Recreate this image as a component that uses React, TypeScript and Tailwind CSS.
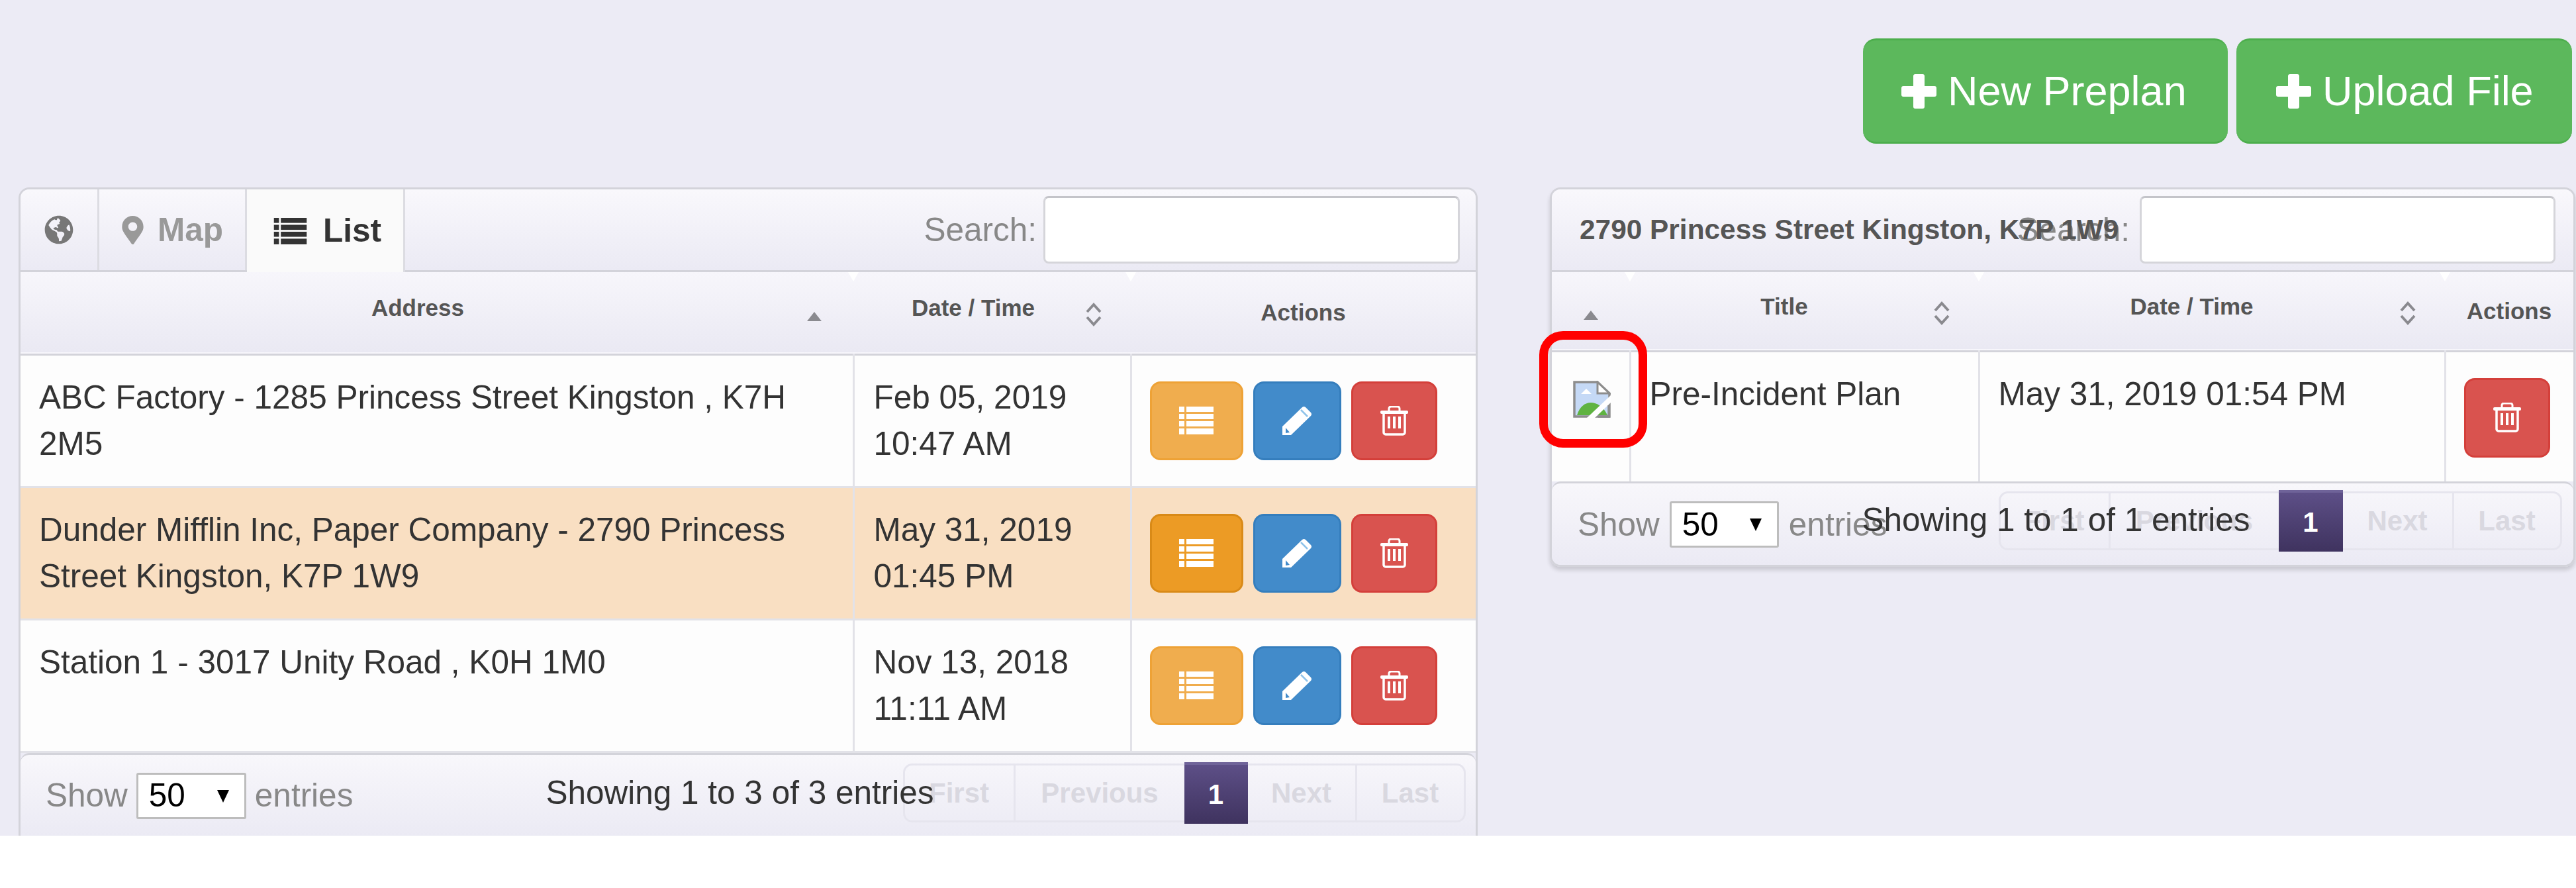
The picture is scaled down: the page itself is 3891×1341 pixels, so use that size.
import { FaGlobeAmericas, FaMapMarkerAlt } from 'react-icons/fa';

// drawn icons: the glyphicon set is not in the icon packages
function PlusIcon() {
  return (
    <svg viewBox="0 0 53 52" className="w-[53px] h-[52px] shrink-0" fill="white">
      <path d="M18 3a3 3 0 0 1 3-3h11a3 3 0 0 1 3 3v15h15a3 3 0 0 1 3 3v10a3 3 0 0 1-3 3H35v15a3 3 0 0 1-3 3H21a3 3 0 0 1-3-3V34H3a3 3 0 0 1-3-3V21a3 3 0 0 1 3-3h15z" />
    </svg>
  );
}

function ListIcon({ className }: { className: string }) {
  return (
    <svg viewBox="0 0 52 42" className={className} fill="currentColor">
      <rect x="0" y="0" width="8" height="8" />
      <rect x="11" y="0" width="41" height="8" />
      <rect x="0" y="11" width="8" height="8" />
      <rect x="11" y="11" width="41" height="8" />
      <rect x="0" y="22" width="8" height="8" />
      <rect x="11" y="22" width="41" height="8" />
      <rect x="0" y="33" width="8" height="9" />
      <rect x="11" y="33" width="41" height="9" />
    </svg>
  );
}

function PencilIcon() {
  return (
    <svg viewBox="0 0 46 45" className="w-[46px] h-[45px]">
      <path d="M1 44V31L31 2a4 4 0 0 1 5 0l8 8a4 4 0 0 1 0 5L14 44z" fill="white" />
      <path d="M29 6l10 10" stroke="#8fc3ea" strokeWidth="2.5" fill="none" />
      <path d="M6 33l6 7-6 1z" fill="#428bca" />
    </svg>
  );
}

function TrashIcon() {
  return (
    <svg viewBox="0 0 42 45" className="w-[42px] h-[45px]">
      <path d="M13 8V4a3 3 0 0 1 3-3h10a3 3 0 0 1 3 3v4" stroke="white" strokeWidth="3" fill="none" />
      <rect x="0" y="7" width="42" height="5" rx="2" fill="white" />
      <path d="M5 11v29a3 3 0 0 0 3 3h26a3 3 0 0 0 3-3V11" stroke="white" strokeWidth="3.5" fill="none" />
      <rect x="11" y="16" width="4" height="18" fill="white" />
      <rect x="19" y="16" width="4" height="18" fill="white" />
      <rect x="27" y="16" width="4" height="18" fill="white" />
    </svg>
  );
}

function SortUp() {
  return (
    <svg viewBox="0 0 30 18" className="w-[30px] h-[18px] shrink-0 mt-[12px]">
      <path d="M15 2l11 14H4z" fill="#8a8a8f" />
    </svg>
  );
}

function SortBoth() {
  return (
    <svg viewBox="0 0 30 36" className="w-[30px] h-[36px] shrink-0 mt-[6px]" fill="none" stroke="#8a8a8f" strokeWidth="4">
      <path d="M5 14L15 3l10 11" />
      <path d="M5 22l10 11 10-11" />
    </svg>
  );
}

function BrokenImage() {
  return (
    <svg viewBox="0 0 57 56" className="w-[57px] h-[56px] block">
      <path d="M2 2h35l18 17v35H2z" fill="#c5d9f6" stroke="#8d8d8d" strokeWidth="3.5" />
      <path d="M37 2v17h18z" fill="white" stroke="#8d8d8d" strokeWidth="3" />
      <path d="M12 20l8-8 8 8z" fill="white" />
      <path d="M6 52c4-13 12-19 21-19s19 6 25 19z" fill="#5fb341" />
      <path d="M57 22v11L33 56H21z" fill="white" />
      <path d="M54 37v17H38" fill="none" stroke="#8d8d8d" strokeWidth="3.5" />
    </svg>
  );
}

function HeaderNotch() {
  return <span className="absolute left-[-8px] top-0 w-0 h-0 border-x-[8px] border-x-transparent border-t-[14px] border-t-white" />;
}

function HeadCell({ title, sort }: { title: string; sort: 'up' | 'both' }) {
  return (
    <div className="flex items-center">
      <span className="flex-1 text-center mb-[14px]">{title}</span>
      {sort === 'up' ? <SortUp /> : <SortBoth />}
    </div>
  );
}

function ActionButtons({ active }: { active: boolean }) {
  return (
    <div className="flex gap-[15px] pl-[27px]">
      <button className={`w-[141px] h-[119px] rounded-[16px] border-[3px] text-white flex items-center justify-center ${active ? 'bg-[#ec9b25] border-[#d98a17]' : 'bg-[#f0ad4e] border-[#eea236]'}`}>
        <ListIcon className="w-[52px] h-[42px]" />
      </button>
      <button className="w-[133px] h-[119px] rounded-[16px] bg-[#428bca] border-[3px] border-[#357ebd] flex items-center justify-center">
        <PencilIcon />
      </button>
      <button className="w-[130px] h-[119px] rounded-[16px] bg-[#d9534f] border-[3px] border-[#d43f3a] flex items-center justify-center">
        <TrashIcon />
      </button>
    </div>
  );
}

function ShowEntries({ gap, selectWidth }: { gap: string; selectWidth: string }) {
  return (
    <div className={`flex items-center shrink-0 text-[#888] h-[70px] ${gap}`}>
      <span>Show</span>
      <div className={`h-[70px] ${selectWidth} bg-white border-[3px] border-[#bdbdbd] rounded-[3px] text-black flex items-center justify-between pl-[16px] pr-[22px]`}>
        <span>50</span>
        <svg viewBox="0 0 20 20" className="w-[20px] h-[20px]"><path d="M1 1h18L10 20z" fill="black" /></svg>
      </div>
      <span>entries</span>
    </div>
  );
}

function PageLink({ label, width, divider }: { label: string; width: string; divider?: boolean }) {
  return (
    <span className={`h-full flex items-center justify-center text-[#d9d8e0] ${width} ${divider ? 'border-r-[3px] border-[#e6e5ee]' : ''}`}>{label}</span>
  );
}

function Pagination({ widths, className }: { widths: string[]; className: string }) {
  return (
    <div className={`h-[89px] shrink-0 flex items-center rounded-[14px] border-[3px] border-[#e6e5ee] text-[42px] font-bold ${className}`}>
      <PageLink label="First" width={widths[0]} divider />
      <PageLink label="Previous" width={widths[1]} />
      <span className={`h-[93px] -my-[2px] ${widths[2]} flex items-center justify-center text-white bg-linear-to-b from-[#5d4f87] to-[#3f335f] border-t-[4px] border-[#6f6399]`}>1</span>
      <PageLink label="Next" width={widths[3]} divider />
      <PageLink label="Last" width={widths[4]} />
    </div>
  );
}

const rows = [
  { address: 'ABC Factory - 1285 Princess Street Kingston , K7H 2M5', date: 'Feb 05, 2019', time: '10:47 AM', active: false },
  { address: 'Dunder Mifflin Inc, Paper Company - 2790 Princess Street Kingston, K7P 1W9', date: 'May 31, 2019', time: '01:45 PM', active: true },
  { address: 'Station 1 - 3017 Unity Road , K0H 1M0', date: 'Nov 13, 2018', time: '11:11 AM', active: false },
];

function AddressPanel() {
  return (
    <section className="w-[2204px] h-[979px] shrink-0 overflow-hidden border-[3px] border-b-0 border-[#d3d3da] rounded-t-[16px]">
      {/* tabs and search */}
      <div className="h-[125px] flex items-stretch justify-between border-b-[3px] border-[#d3d3da] bg-linear-to-b from-[#f9f8fc] to-[#ebeaf4]">
        <div className="flex items-stretch">
          <div className="w-[119px] flex items-center justify-center border-r-[3px] border-[#dcdce2] text-[#777] text-[44px]">
            <FaGlobeAmericas />
          </div>
          <div className="w-[223px] flex items-center gap-[16px] pl-[29px] border-r-[3px] border-[#dcdce2] text-[#999] font-bold">
            <FaMapMarkerAlt className="text-[43px]" />
            <span>Map</span>
          </div>
          <div className="w-[239px] -mb-[3px] flex items-center gap-[24px] pl-[40px] border-r-[3px] border-[#dcdce2] bg-[#fafafa] text-[#333] font-bold relative">
            <ListIcon className="w-[51px] h-[40px]" />
            <span>List</span>
          </div>
        </div>
        <div className="flex items-center gap-[10px] pr-[24px] text-[#888]">
          <label>Search:</label>
          <input className="w-[629px] h-[102px] bg-white border-[3px] border-[#d5d5da] border-t-[#c4c4c9] rounded-[8px]" />
        </div>
      </div>

      <table className="w-[2198px] table-fixed">
        <colgroup>
          <col className="w-[1258px]" />
          <col className="w-[419px]" />
          <col className="w-[521px]" />
        </colgroup>
        <thead>
          <tr className="h-[124px] bg-linear-to-b from-[#f7f6fb] to-[#eae9f3] border-b-[3px] border-[#d3d3da] text-[35px] font-bold text-[#555]">
            <th className="font-bold pl-[16px] pr-[44px]">
              <HeadCell title="Address" sort="up" />
            </th>
            <th className="font-bold relative pl-[14px] pr-[41px]">
              <HeaderNotch />
              <HeadCell title="Date / Time" sort="both" />
            </th>
            <th className="font-bold relative">
              <HeaderNotch />
              Actions
            </th>
          </tr>
        </thead>
        <tbody>
          {rows.map((row) => (
            <tr key={row.address} className={`h-[200px] border-b-[3px] border-[#e2e2e8] ${row.active ? 'bg-[#f9dfc2]' : 'bg-[#fdfdfd]'}`}>
              <td className="align-top p-[28px] leading-[70px]">{row.address}</td>
              <td className="align-top p-[28px] pl-[29px] leading-[70px] border-l-[3px] border-[#e2e2e8]">
                {row.date}
                <br />
                {row.time}
              </td>
              <td className="border-l-[3px] border-[#e2e2e8]">
                <ActionButtons active={row.active} />
              </td>
            </tr>
          ))}
        </tbody>
      </table>

      <footer className="h-[127px] flex items-start pl-[38px] pt-[13px] rounded-t-[14px] border-t-[3px] border-[#d3d3da] bg-linear-to-b from-[#f8f7fb] to-[#ebeaf4]">
        <div className="pt-[14px]">
          <ShowEntries gap="gap-[13px]" selectWidth="w-[166px]" />
        </div>
        <span className="ml-[291px] mt-[9px] leading-[70px] whitespace-nowrap text-[#333] shrink-0 relative z-10">Showing 1 to 3 of 3 entries</span>
        <Pagination className="ml-[-47px]" widths={['w-[167px]', 'w-[255px]', 'w-[96px]', 'w-[165px]', 'w-[161px]']} />
      </footer>
    </section>
  );
}

function FilesPanel() {
  return (
    <section className="w-[1549px] h-[573px] shrink-0 overflow-hidden border-[3px] border-[#d3d3da] rounded-[16px] shadow-[0_5px_6px_rgba(0,0,0,0.15)]">
      <div className="h-[125px] flex items-center border-b-[3px] border-[#d3d3da] pl-[42px] bg-linear-to-b from-[#f9f8fc] to-[#ebeaf4]">
        <span className="text-[42.4px] font-bold text-[#555] whitespace-nowrap w-[0px] relative z-10">2790 Princess Street Kingston, K7P 1W9</span>
        <div className="ml-auto flex items-center gap-[15px] pr-[27px] text-[#888]">
          <label>Search:</label>
          <input className="w-[628px] h-[102px] bg-white border-[3px] border-[#d5d5da] border-t-[#c4c4c9] rounded-[8px]" />
        </div>
      </div>

      <table className="w-[1543px] table-fixed">
        <colgroup>
          <col className="w-[118px]" />
          <col className="w-[527px]" />
          <col className="w-[704px]" />
          <col className="w-[194px]" />
        </colgroup>
        <thead>
          <tr className="h-[119px] bg-linear-to-b from-[#f7f6fb] to-[#eae9f3] border-b-[3px] border-[#d3d3da] text-[35px] font-bold text-[#555]">
            <th className="font-bold">
              <div className="flex justify-center"><SortUp /></div>
            </th>
            <th className="font-bold relative pl-[10px] pr-[41px]">
              <HeaderNotch />
              <HeadCell title="Title" sort="both" />
            </th>
            <th className="font-bold relative pl-[10px] pr-[41px]">
              <HeaderNotch />
              <HeadCell title="Date / Time" sort="both" />
            </th>
            <th className="font-bold relative">
              <HeaderNotch />
              Actions
            </th>
          </tr>
        </thead>
        <tbody>
          <tr className="h-[197px] bg-[#fdfdfd]">
            <td className="align-top pt-[43px] pl-[32px]">
              <BrokenImage />
            </td>
            <td className="align-top pt-[28px] pl-[28px] leading-[70px] border-l-[3px] border-[#e2e2e8]">Pre-Incident Plan</td>
            <td className="align-top pt-[28px] pl-[28px] leading-[70px] border-l-[3px] border-[#e2e2e8]">May 31, 2019 01:54 PM</td>
            <td className="align-top pt-[39px] pl-[27px] border-l-[3px] border-[#e2e2e8]">
              <button className="w-[130px] h-[120px] rounded-[16px] bg-[#d9534f] border-[3px] border-[#d43f3a] flex items-center justify-center">
                <TrashIcon />
              </button>
            </td>
          </tr>
        </tbody>
      </table>

      <footer className="h-[126px] flex items-start pl-[39px] pt-[12px] rounded-[14px] border-t-[3px] border-[#d3d3da] bg-linear-to-b from-[#f8f7fb] to-[#ebeaf4]">
        <div className="pt-[15px]">
          <ShowEntries gap="gap-[15px]" selectWidth="w-[165px]" />
        </div>
        <span className="ml-[-38px] mt-[8px] leading-[70px] whitespace-nowrap text-[#333] shrink-0 relative z-10">Showing 1 to 1 of 1 entries</span>
        <Pagination className="ml-[-380px]" widths={['w-[166px]', 'w-[254px]', 'w-[97px]', 'w-[168px]', 'w-[160px]']} />
      </footer>
    </section>
  );
}

export default function App() {
  return (
    <div className="w-[3891px] h-[1341px] overflow-hidden bg-white font-['Liberation_Sans',Arial,sans-serif] text-[49.5px] text-[#333] relative">
      <main className="h-[1262px] bg-[#ecebf5]">
        <div className="flex justify-end gap-[13px] pt-[58px] pr-[6px]">
          <button className="w-[551px] h-[159px] rounded-[20px] bg-[#5cb85c] border-t-[3px] border-b-[3px] border-[#4cae4c] flex items-center pl-[58px] gap-[17px] text-white text-[63px]">
            <PlusIcon />
            New Preplan
          </button>
          <button className="w-[507px] h-[159px] rounded-[20px] bg-[#5cb85c] border-t-[3px] border-b-[3px] border-[#4cae4c] flex items-center pl-[60px] gap-[17px] text-white text-[63px]">
            <PlusIcon />
            Upload File
          </button>
        </div>

        <div className="flex items-start gap-[109px] pl-[28px] mt-[66px]">
          <AddressPanel />
          <FilesPanel />
        </div>
      </main>

      {/* red callout drawn over the broken thumbnail */}
      <div className="absolute left-[2325px] top-[500px] w-[163px] h-[176px] border-[13px] border-[#ff0000] rounded-[36px]" />
    </div>
  );
}
